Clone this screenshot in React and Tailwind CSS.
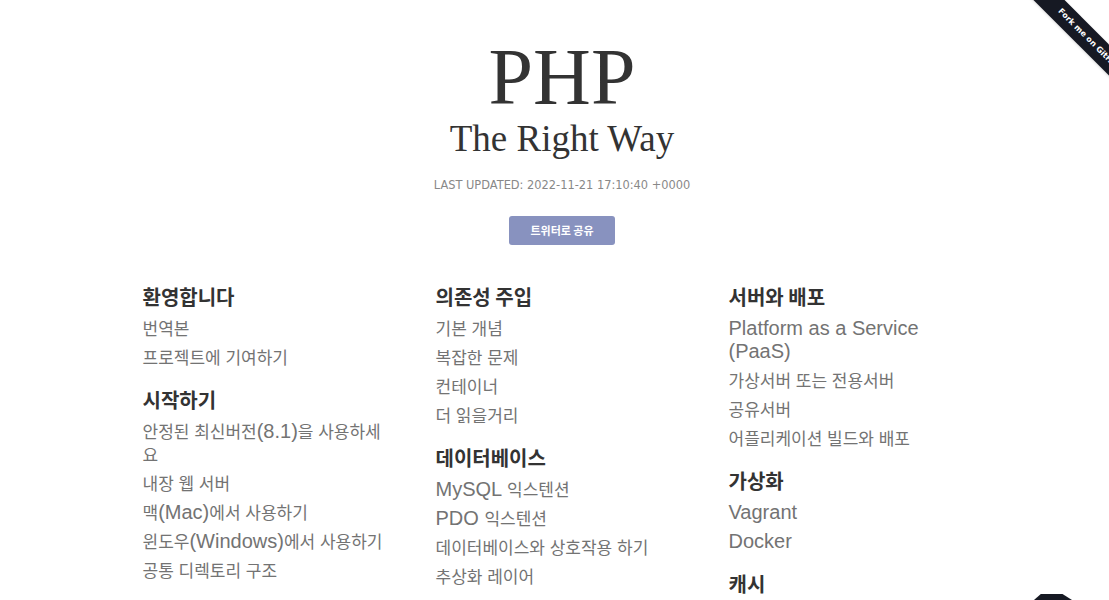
import React from 'react';

const columns = [
  [
    { title: '환영합니다', items: ['번역본', '프로젝트에 기여하기'] },
    {
      title: '시작하기',
      items: [
        '안정된 최신버전(8.1)을 사용하세요',
        '내장 웹 서버',
        '맥(Mac)에서 사용하기',
        '윈도우(Windows)에서 사용하기',
        '공통 디렉토리 구조',
      ],
    },
    { title: '코딩 스타일 가이드', items: [] },
  ],
  [
    { title: '의존성 주입', items: ['기본 개념', '복잡한 문제', '컨테이너', '더 읽을거리'] },
    {
      title: '데이터베이스',
      items: ['MySQL 익스텐션', 'PDO 익스텐션', '데이터베이스와 상호작용 하기', '추상화 레이어'],
    },
    { title: '템플릿', items: [] },
  ],
  [
    {
      title: '서버와 배포',
      items: ['Platform as a Service (PaaS)', '가상서버 또는 전용서버', '공유서버', '어플리케이션 빌드와 배포'],
    },
    { title: '가상화', items: ['Vagrant', 'Docker'] },
    { title: '캐시', items: ['Opcode 캐시', '오브젝트 캐시'] },
  ],
];

// hangul runs render smaller, latin stays at the line's base size
const Mixed = ({ text }) =>
  text
    .split(/([\uAC00-\uD7A3]+(?:\s+[\uAC00-\uD7A3]+)*)/)
    .filter(Boolean)
    .map((part, i) =>
      /[\uAC00-\uD7A3]/.test(part) ? (
        <span key={i} className="text-[17px] leading-none">{part}</span>
      ) : (
        <span key={i}>{part}</span>
      )
    );

const ForkRibbon = () => (
  <div className="absolute top-0 right-0 w-[120px] h-[120px] overflow-hidden pointer-events-none">
    <div className="absolute left-[-10px] top-[19px] w-[200px] h-[22px] rotate-45 bg-[#161923] flex items-center pl-[72px] text-white text-[8px] font-bold font-['DejaVu_Sans',sans-serif] shadow">
      Fork me on GitHub
    </div>
  </div>
);

export default function App() {
  return (
    <div className="relative h-[600px] overflow-hidden bg-white font-['Liberation_Sans','Noto_Sans_CJK_KR',sans-serif]">
      <ForkRibbon />
      <div className="absolute left-[1034px] top-[594px] w-[38px] h-[6px] bg-[#161923] [clip-path:polygon(18%_0,75%_0,100%_100%,0_100%)]" />

      <div className="pl-[15px]">
        <header className="flex flex-col items-center text-[#333]">
          <h1 className="mt-[37px] text-[80px] leading-[80px] font-['Liberation_Serif',serif]">PHP</h1>
          <h2 className="mt-[3px] text-[37px] leading-[37px] font-['Liberation_Serif',serif]">The Right Way</h2>
          <p className="mt-[20px] text-[11.4px] leading-[16px] text-[#888] font-['DejaVu_Sans',sans-serif]">
            LAST UPDATED: 2022-11-21 17:10:40 +0000
          </p>
          <button className="mt-[23px] w-[106px] h-[29px] rounded-[3px] bg-[#8892bf] text-white text-[11px] font-bold font-['Noto_Sans_CJK_KR',sans-serif]">
            트위터로 공유
          </button>
        </header>

        <div className="mt-[39px] flex justify-center pr-[3px]">
          <div className="grid grid-cols-3 gap-x-[43px] w-[836px]">
            {columns.map((col, ci) => (
              <div key={ci} className="flex flex-col gap-[18px]">
                {col.map((sec) => (
                  <section key={sec.title}>
                    <h3 className="text-[20px] leading-[26px] font-bold text-[#333] font-['Noto_Sans_CJK_KR',sans-serif]">
                      {sec.title}
                    </h3>
                    <ul className="mt-[7px] flex flex-col gap-[6px]">
                      {sec.items.map((item) => (
                        <li key={item} className="text-[20px] leading-[23px] text-[#737373]">
                          <Mixed text={item} />
                        </li>
                      ))}
                    </ul>
                  </section>
                ))}
              </div>
            ))}
          </div>
        </div>
      </div>
    </div>
  );
}
